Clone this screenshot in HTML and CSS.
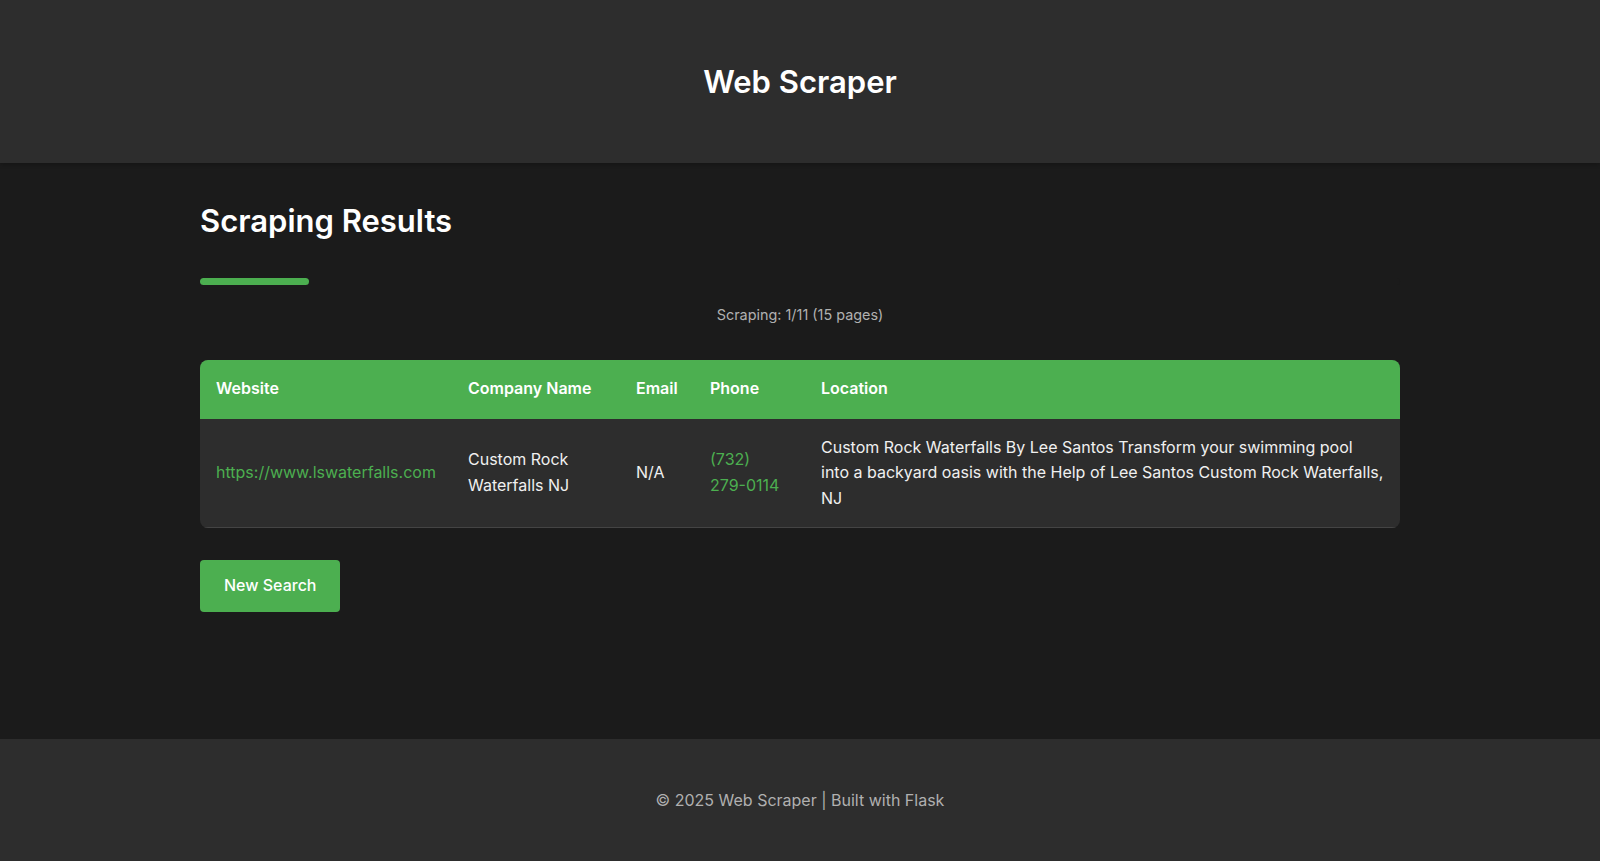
FILE: index.html
```html
<!DOCTYPE html>
<html lang="en">
<head>
<meta charset="utf-8">
<title>Web Scraper</title>
<link rel="stylesheet" href="styles.css">
</head>
<body>
<header class="site-header">
  <h1 class="site-title">Web Scraper</h1>
</header>
<main class="main">
  <div class="container">
    <h2 class="page-title">Scraping Results</h2>
    <div class="progress"><div class="progress-fill" style="width: 9.09%"></div></div>
    <p class="status">Scraping: 1/11 (15 pages)</p>
    <div class="table-wrap">
      <table class="results">
        <thead>
          <tr>
            <th class="col-website">Website</th>
            <th class="col-company">Company Name</th>
            <th class="col-email">Email</th>
            <th class="col-phone">Phone</th>
            <th class="col-location">Location</th>
          </tr>
        </thead>
        <tbody>
          <tr>
            <td><a class="link" href="#">https://www.lswaterfalls.com</a></td>
            <td>Custom Rock Waterfalls NJ</td>
            <td>N/A</td>
            <td><a class="link" href="#">(732) 279-0114</a></td>
            <td>Custom Rock Waterfalls By Lee Santos Transform your swimming pool into a backyard oasis with the Help of Lee Santos Custom Rock Waterfalls, NJ</td>
          </tr>
        </tbody>
      </table>
    </div>
    <a class="btn" href="#">New Search</a>
  </div>
</main>
<footer class="site-footer">
  <p class="footer-text">© 2025 Web Scraper | Built with Flask</p>
</footer>
</body>
</html>
```
FILE: styles.css
```css
* { box-sizing: border-box; }
html, body { margin: 0; padding: 0; }
body {
  font-family: Inter, "Noto Sans", sans-serif;
  font-size: 16px;
  line-height: 1.6;
  color: #f0f0f0;
  background: #1b1b1b;
  min-height: 100vh;
  display: flex;
  flex-direction: column;
}
.site-header {
  background: #2d2d2d;
  height: 163px;
  display: flex;
  align-items: center;
  justify-content: center;
  box-shadow: 0 2px 4px rgba(0,0,0,0.2);
}
.site-title {
  margin: 0;
  font-size: 31px;
  font-weight: 600;
  line-height: 38px;
  color: #fff;
}
.main {
  flex: 1;
  padding-top: 39px;
}
.container {
  width: 1200px;
  margin: 0 auto;
}
.page-title {
  margin: 0;
  font-size: 31px;
  font-weight: 600;
  line-height: 38px;
  color: #fff;
}
.progress {
  margin-top: 38px;
  height: 7px;
  border-radius: 4px;
  background: #1b1b1b;
}
.progress-fill {
  height: 100%;
  background: #4caf50;
  border-radius: 4px;
}
.status {
  margin: 18px 0 0;
  text-align: center;
  font-size: 14.4px;
  color: #b0b0b0;
}
.table-wrap {
  margin-top: 34px;
  border-radius: 8px;
  overflow: hidden;
  background: #2d2d2d;
}
.results {
  width: 100%;
  border-collapse: collapse;
  table-layout: fixed;
}
.col-website { width: 252px; }
.col-company { width: 168px; }
.col-email { width: 74px; }
.col-phone { width: 111px; }
.results th {
  background: #4caf50;
  color: #fff;
  font-weight: 600;
  text-align: left;
  padding: 16px 16px 17px;
  font-size: 16px;
}
.results td {
  padding: 16px;
  border-bottom: 1px solid #444;
  color: #f0f0f0;
  font-size: 16px;
}
.link {
  color: #4caf50;
  text-decoration: none;
}
.btn {
  display: inline-block;
  margin-top: 32px;
  padding: 13px 24px;
  background: #4caf50;
  color: #fff;
  font-size: 16px;
  font-weight: 500;
  border-radius: 4px;
  text-decoration: none;
}
.site-footer {
  background: #2d2d2d;
  padding: 49px 0 47px;
  text-align: center;
}
.footer-text {
  margin: 0;
  color: #b0b0b0;
  font-size: 16px;
}
```
